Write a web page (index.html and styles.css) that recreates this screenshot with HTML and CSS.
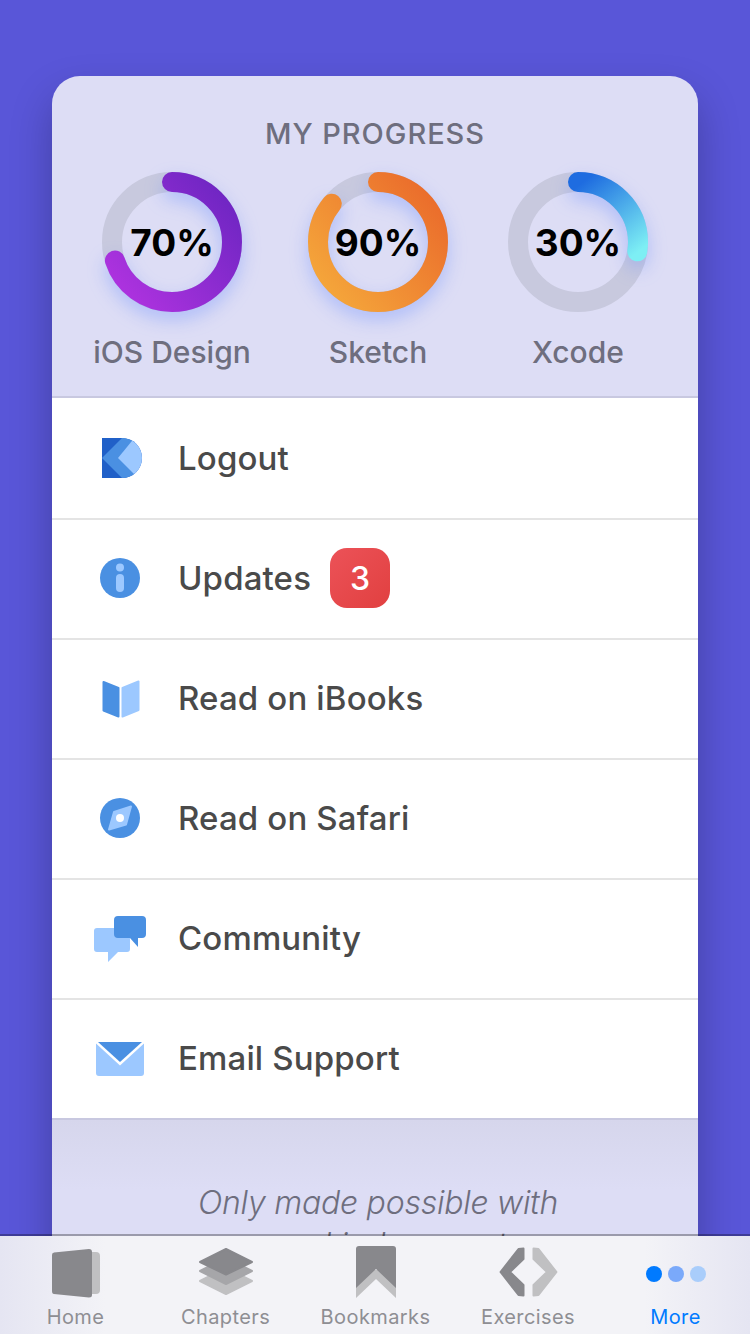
FILE: index.html
```
<!DOCTYPE html>
<html lang="en">
<head>
<meta charset="utf-8">
<title>More</title>
<link rel="stylesheet" href="styles.css">
</head>
<body>
<main class="card">
  <section class="progress">
    <h2 class="progress-title">MY PROGRESS</h2>
    <div class="rings">
      <div class="ring-item">
        <div class="ring">
          <svg class="ring-svg" viewBox="0 0 180 180" width="180" height="180">
            <defs><linearGradient id="gp" gradientUnits="userSpaceOnUse" gradientTransform="rotate(90 90 90)" x1="160" y1="30" x2="30" y2="140"><stop offset="0" stop-color="#6724BF"/><stop offset="1" stop-color="#B033E0"/></linearGradient></defs>
            <circle class="track" cx="90" cy="90" r="60"/>
            <g class="glow"><circle class="bar bar-purple" cx="90" cy="90" r="60" pathLength="100" stroke-dasharray="70 100" transform="rotate(-90 90 90)"/></g>
          </svg>
          <span class="percent">70%</span>
        </div>
        <p class="ring-label">iOS Design</p>
      </div>
      <div class="ring-item">
        <div class="ring">
          <svg class="ring-svg" viewBox="0 0 180 180" width="180" height="180">
            <defs><linearGradient id="go" gradientUnits="userSpaceOnUse" gradientTransform="rotate(90 90 90)" x1="150" y1="40" x2="30" y2="140"><stop offset="0" stop-color="#EA6A2B"/><stop offset="1" stop-color="#F5A83B"/></linearGradient></defs>
            <circle class="track" cx="90" cy="90" r="60"/>
            <g class="glow"><circle class="bar bar-orange" cx="90" cy="90" r="60" pathLength="100" stroke-dasharray="86 100" transform="rotate(-90 90 90)"/></g>
          </svg>
          <span class="percent">90%</span>
        </div>
        <p class="ring-label">Sketch</p>
      </div>
      <div class="ring-item">
        <div class="ring">
          <svg class="ring-svg" viewBox="0 0 180 180" width="180" height="180">
            <defs><linearGradient id="gb" gradientUnits="userSpaceOnUse" gradientTransform="rotate(90 90 90)" x1="95" y1="30" x2="150" y2="100"><stop offset="0" stop-color="#1E6CE0"/><stop offset="1" stop-color="#7DEFF4"/></linearGradient></defs>
            <circle class="track" cx="90" cy="90" r="60"/>
            <g class="glow"><circle class="bar bar-blue" cx="90" cy="90" r="60" pathLength="100" stroke-dasharray="27.500 100" transform="rotate(-90 90 90)"/></g>
          </svg>
          <span class="percent">30%</span>
        </div>
        <p class="ring-label">Xcode</p>
      </div>
    </div>
  </section>

  <ul class="menu">
    <li class="row">
      <svg class="row-icon" viewBox="90 428 60 60" width="60" height="60">
        <defs><clipPath id="dshape"><path d="M102 438h20a20 20 0 0 1 0 40h-20z"/></clipPath></defs>
        <g clip-path="url(#dshape)">
          <rect class="c-navy" x="102" y="438" width="40" height="40"/>
          <path class="c-mid" d="M122 438h14v40h-14l-20-20z"/>
          <path class="c-light" d="M136 436h8v44h-4l-22-22z"/>
        </g>
      </svg>
      <span class="row-text">Logout</span>
    </li>
    <li class="row">
      <svg class="row-icon" viewBox="90 548 60 60" width="60" height="60">
        <circle class="c-mid" cx="120" cy="578" r="20"/>
        <circle class="c-light" cx="120" cy="567.5" r="4"/>
        <rect class="c-light" x="116" y="574" width="8" height="18" rx="4"/>
      </svg>
      <span class="row-text">Updates</span>
      <span class="badge">3</span>
    </li>
    <li class="row">
      <svg class="row-icon" viewBox="90 668 60 60" width="60" height="60">
        <path class="c-mid soft" d="M103.5 682l15 6v28.500l-15-6z"/>
        <path class="c-light soft" d="M122.500 688l16-6.500v28.500l-16 6.500z"/>
      </svg>
      <span class="row-text">Read on iBooks</span>
    </li>
    <li class="row">
      <svg class="row-icon" viewBox="90 788 60 60" width="60" height="60">
        <circle class="c-mid" cx="120" cy="818" r="20"/>
        <path class="c-light soft" d="M109 829.500l5-17.500 17-5.500-5 18z"/>
        <circle class="c-white" cx="120" cy="818" r="4"/>
      </svg>
      <span class="row-text">Read on Safari</span>
    </li>
    <li class="row">
      <svg class="row-icon" viewBox="90 908 60 60" width="60" height="60">
        <path class="c-light" d="M97 928h30a3 3 0 0 1 3 3v18a3 3 0 0 1-3 3h-9l-10 10v-10H97a3 3 0 0 1-3-3V931a3 3 0 0 1 3-3z"/>
        <path class="c-mid" d="M118 916h24a4 4 0 0 1 4 4v14a4 4 0 0 1-4 4h-4v9l-8-9h-12a4 4 0 0 1-4-4v-14a4 4 0 0 1 4-4z"/>
      </svg>
      <span class="row-text">Community</span>
    </li>
    <li class="row">
      <svg class="row-icon" viewBox="90 1028 60 60" width="60" height="60">
        <path class="c-light" d="M96 1043.500l24 22 24-22V1073a3 3 0 0 1-3 3H99a3 3 0 0 1-3-3z"/>
        <path class="c-mid" d="M98 1042h44l-22 20z"/>
      </svg>
      <span class="row-text">Email Support</span>
    </li>
  </ul>

  <footer class="thanks">
    <p class="thanks-text">Only made possible with<br>your kind support</p>
  </footer>
</main>

<nav class="tabbar">
  <a class="tab">
    <svg class="tab-icon" viewBox="35 1244 80 56" width="80" height="56">
      <rect class="t-light" x="80" y="1252" width="20" height="42" rx="4"/>
      <path class="t-dark soft" d="M54 1253.500l35-3.500c1.500 0 2 1 2 2v43c0 1-.5 1.500-2 1.500l-35-3.500c-1 0-1-1-1-2v-36c0-1 0-1.500 1-1.500z"/>
    </svg>
    <span class="tab-label">Home</span>
  </a>
  <a class="tab">
    <svg class="tab-icon" viewBox="185 1244 80 56" width="80" height="56">
      <path class="t-light soft" d="M226 1268l26 13-26 13-26-13z"/>
      <path class="t-mid soft" d="M226 1258l26 13-26 13-26-13z"/>
      <path class="t-dark soft" d="M226 1249l26 13-26 12.500-26-12.500z"/>
    </svg>
    <span class="tab-label">Chapters</span>
  </a>
  <a class="tab">
    <svg class="tab-icon" viewBox="335 1244 80 56" width="80" height="56">
      <path class="t-light" d="M356 1270h40v28l-20-19-20 19z"/>
      <path class="t-dark" d="M359 1246h34a3 3 0 0 1 3 3v39l-20-19-20 19v-39a3 3 0 0 1 3-3z"/>
    </svg>
    <span class="tab-label">Bookmarks</span>
  </a>
  <a class="tab tab-shift">
    <svg class="tab-icon" viewBox="487.500 1244 80 56" width="80" height="56">
      <path class="t-dark soft" d="M518 1249l5-.5v10.500l-13.500 13 13.500 13v10.500l-5-.5-18-23z"/>
      <path class="t-light soft" d="M538 1249l-5-.5v10.500l13.500 13-13.500 13v10.500l5-.5 18-23z"/>
    </svg>
    <span class="tab-label">Exercises</span>
  </a>
  <a class="tab">
    <svg class="tab-icon" viewBox="635 1244 80 56" width="80" height="56">
      <circle class="d-1" cx="654" cy="1274" r="8"/>
      <circle class="d-2" cx="676" cy="1274" r="8"/>
      <circle class="d-3" cx="698" cy="1274" r="8"/>
    </svg>
    <span class="tab-label tab-label-on">More</span>
  </a>
</nav>
</body>
</html>
```

FILE: styles.css
```
* { box-sizing: border-box; }
html, body { margin: 0; padding: 0; }
body {
  width: 750px;
  height: 1334px;
  overflow: hidden;
  background: #5956D8;
  font-family: Inter, "Liberation Sans", sans-serif;
  padding: 76px 52px 0;
}
.card {
  height: 1258px;
  overflow: visible;
  background: #DDDDF5;
  border-radius: 28px 28px 0 0;
  box-shadow: 0 20px 40px rgba(0, 0, 0, .25);
}
.progress {
  height: 322px;
  border-bottom: 2px solid #C8C8E0;
  padding-top: 40px;
}
.progress-title {
  margin: 0;
  height: 36px;
  font-size: 29px;
  line-height: 36px;
  font-weight: 550;
  letter-spacing: .95px;
  color: #6E6E7E;
  text-align: center;
}
.rings {
  display: grid;
  grid-template-columns: 206px 206px 194px;
  padding-left: 17px;
}
.ring-item {
  display: flex;
  flex-direction: column;
  align-items: center;
}
.ring {
  display: grid;
  place-items: center;
  width: 180px;
  height: 180px;
}
.ring > * { grid-area: 1 / 1; }
.ring-svg { display: block; overflow: visible; }
.track, .bar { fill: none; stroke-width: 20; }
.track { stroke: #C8C9DE; }
.bar { stroke-linecap: round; }
.glow { filter: drop-shadow(0 8px 9px rgba(90, 130, 255, .35)); }
.bar-purple { stroke: url(#gp); }
.bar-orange { stroke: url(#go); }
.bar-blue { stroke: url(#gb); }
.percent {
  font-size: 37px;
  font-weight: 650;
  color: #000;
}
.ring-label {
  margin: 0;
  font-size: 30px;
  line-height: 40px;
  font-weight: 550;
  color: #6E6E7E;
}
.menu {
  list-style: none;
  margin: 0;
  padding: 2px 0 0;
  background: #fff;
}
.row {
  display: flex;
  align-items: center;
  height: 120px;
  padding: 0 0 2px 38px;
  border-bottom: 2px solid #E4E4E4;
}
.row:last-child { border-bottom-color: #C8C8E0; }
.row-icon { display: block; margin-right: 28px; flex: none; }
.row-text {
  font-size: 33px;
  font-weight: 550;
  letter-spacing: .15px;
  color: #4A4A4A;
}
.badge {
  display: flex;
  align-items: center;
  justify-content: center;
  width: 60px;
  height: 60px;
  margin-left: 19px;
  border-radius: 17px;
  background: linear-gradient(135deg, #EC5258, #E14040);
  color: #fff;
  font-size: 32px;
  font-weight: 500;
}
.c-navy { fill: #2060C8; }
.c-mid { fill: #4A90E2; }
.c-light { fill: #9CC8FF; }
.c-white { fill: #fff; }
.soft { stroke-width: 2; stroke-linejoin: round; }
.c-mid.soft { stroke: #4A90E2; }
.c-light.soft { stroke: #9CC8FF; }
.thanks {
  height: 138px;
  padding-top: 62px;
  background: linear-gradient(#D6D6EC, #DDDDF5 70px);
}
.thanks-text {
  margin: 0;
  padding-left: 6px;
  text-align: center;
  font-size: 32px;
  line-height: 42px;
  font-style: italic;
  font-weight: 300;
  letter-spacing: -.25px;
  color: #6E6E7E;
}
.tabbar {
  position: fixed;
  left: 0;
  right: 0;
  bottom: 0;
  height: 100px;
  display: flex;
  padding-top: 8px;
  border-top: 2px solid rgba(0, 0, 0, .3);
  background: linear-gradient(90deg, #E5E5F2, #F3F3F7 14%, #F3F3F7 86%, #E5E5F2);
  background-clip: padding-box;
}
.tab {
  width: 150px;
  display: flex;
  flex-direction: column;
  align-items: center;
}
.tab-shift { padding-left: 5px; }
.tab-icon { display: block; }
.tab-label {
  margin-top: 5px;
  padding-left: 1px;
  font-size: 20px;
  line-height: 24px;
  letter-spacing: .4px;
  color: #8E8E93;
}
.tab-label-on { color: #007AFF; }
.t-dark { fill: #88888C; }
.t-mid { fill: #A6A6A9; }
.t-light { fill: #C0C0C2; }
.t-dark.soft { stroke: #88888C; }
.t-mid.soft { stroke: #A6A6A9; }
.t-light.soft { stroke: #C0C0C2; }
.d-1 { fill: #007AFF; }
.d-2 { fill: #7AA9FA; }
.d-3 { fill: #A9CDFB; }
```
